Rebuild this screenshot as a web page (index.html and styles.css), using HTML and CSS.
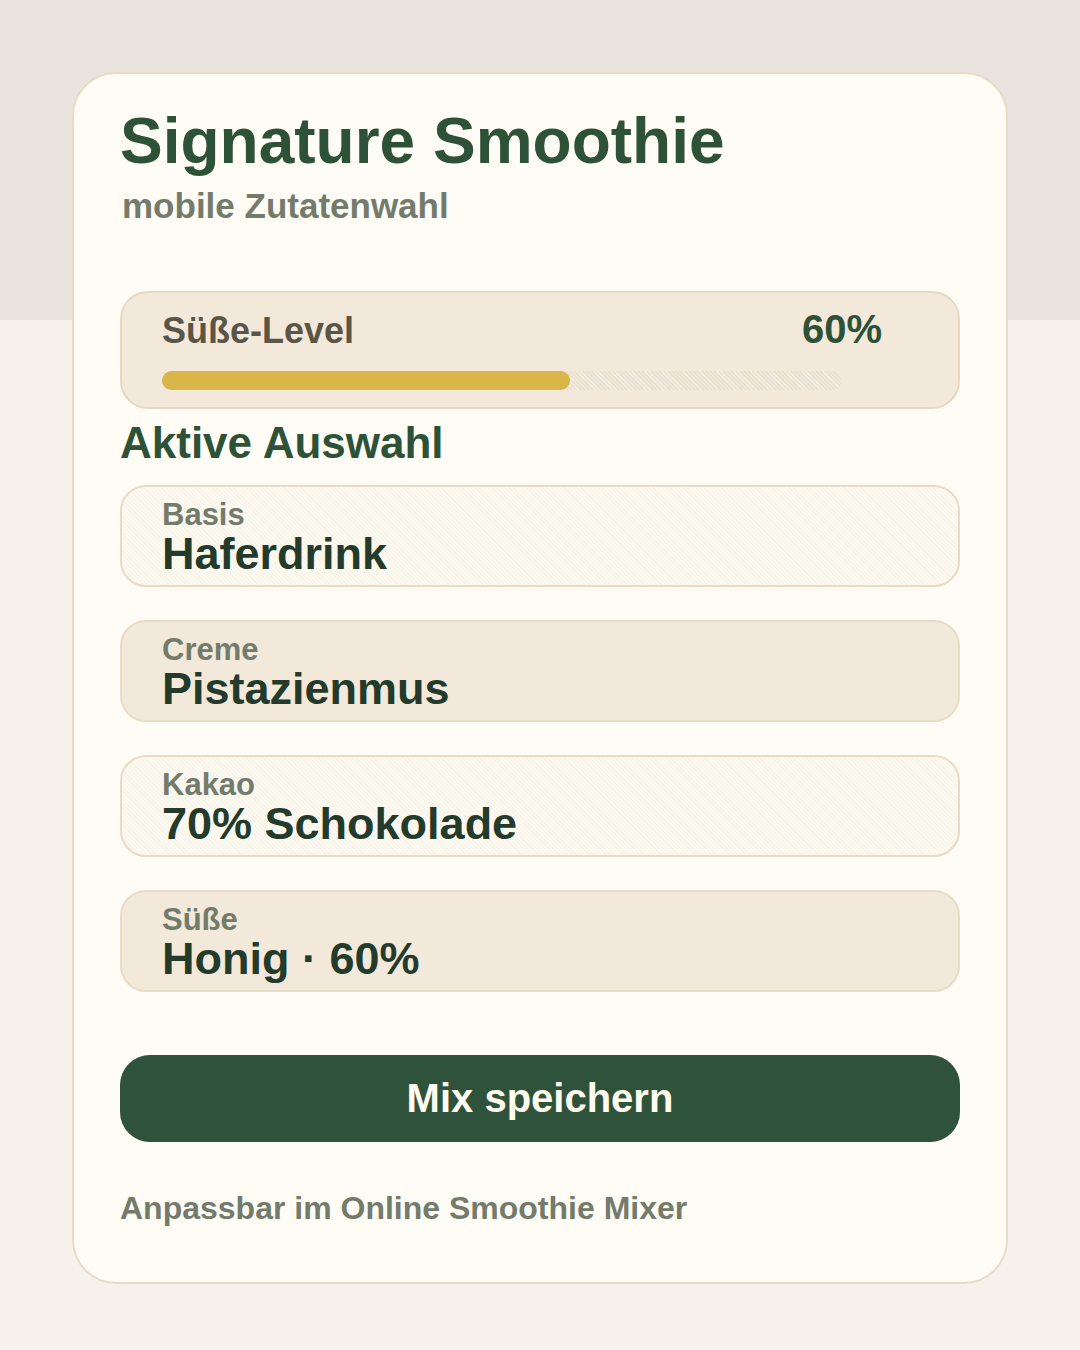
FILE: index.html
```html
<!DOCTYPE html>
<html lang="de">
<head>
    <meta charset="UTF-8">
    <meta name="viewport" content="width=device-width, initial-scale=1.0">
    <title>Signature Smoothie</title>
    <link rel="stylesheet" href="styles.css">
</head>
<body>

    <div class="card">
        <h1 class="title">Signature Smoothie</h1>
        <p class="subtitle">mobile Zutatenwahl</p>

        <div class="level">
            <div class="level-head">
                <span class="level-label">Süße-Level</span>
                <span class="level-value">60%</span>
            </div>
            <div class="track">
                <div class="fill" style="width: 60%"></div>
            </div>
        </div>

        <h2 class="section">Aktive Auswahl</h2>

        <div class="choices">
            <div class="choice">
                <div class="choice-label">Basis</div>
                <div class="choice-value">Haferdrink</div>
            </div>
            <div class="choice alt">
                <div class="choice-label">Creme</div>
                <div class="choice-value">Pistazienmus</div>
            </div>
            <div class="choice">
                <div class="choice-label">Kakao</div>
                <div class="choice-value">70% Schokolade</div>
            </div>
            <div class="choice alt">
                <div class="choice-label">Süße</div>
                <div class="choice-value">Honig · 60%</div>
            </div>
        </div>

        <button class="save">Mix speichern</button>

        <p class="note">Anpassbar im Online Smoothie Mixer</p>
    </div>

</body>
</html>
```

FILE: styles.css
```css
html {
    background-color: #f6f2eb;
}

body {
    margin: 0;
    padding: 72px 0 68px;
    font-family: "Liberation Sans", Arial, sans-serif;
    font-weight: bold;
    background: #f6f2eb linear-gradient(#e8e3dc, #e8e3dc) top / 100% 320px no-repeat;
}

.card {
    width: 936px;
    box-sizing: border-box;
    margin: 0 auto;
    padding: 32px 46px 55px;
    background-color: #fffcf5;
    border: 2px solid #e8dcc9;
    border-radius: 44px;
}

.title {
    margin: 0;
    font-size: 64px;
    line-height: 70px;
    color: #2e5238;
}

.subtitle {
    margin: 10px 0 0 2px;
    font-size: 35px;
    line-height: 40px;
    color: #737b6c;
}

.level {
    margin-top: 65px;
    padding: 14px 76px 17px 40px;
    background-color: #f3e9da;
    border: 2px solid #e6d8c4;
    border-radius: 28px;
}

.level-head {
    display: flex;
    justify-content: space-between;
    align-items: baseline;
    line-height: 44px;
}

.level-label {
    font-size: 36px;
    color: #5b5545;
}

.level-value {
    font-size: 40px;
    color: #2e5238;
}

.track {
    margin: 18px 40px 0 0;
    height: 19px;
    border-radius: 10px;
    background-color: #ece2d2;
    background-image: repeating-linear-gradient(45deg, rgba(255,255,255,0.35) 0 1px, transparent 1px 3px);
}

.fill {
    height: 100%;
    border-radius: 10px;
    background-color: #d9b649;
}

.section {
    margin: 9px 0 17px;
    font-size: 44px;
    line-height: 50px;
    color: #2e5238;
}

.choices {
    display: flex;
    flex-direction: column;
    gap: 33px;
}

.choice {
    padding: 12px 40px 8px;
    background-color: #fcf9f1;
    background-image: repeating-linear-gradient(45deg, rgba(240,232,218,0.35) 0 1px, transparent 1px 3px);
    border: 2px solid #e8dcc9;
    border-radius: 26px;
}

.choice.alt {
    background-color: #f3e9da;
    background-image: none;
}

.choice-label {
    font-size: 31px;
    line-height: 32px;
    color: #737b6c;
}

.choice-value {
    font-size: 45px;
    line-height: 46px;
    color: #243a2b;
}

.save {
    display: block;
    width: 100%;
    height: 87px;
    margin-top: 63px;
    border: none;
    border-radius: 30px;
    background-color: #2f533a;
    color: #fffcf0;
    font-family: inherit;
    font-weight: bold;
    font-size: 40px;
}

.note {
    margin: 47px 0 0;
    font-size: 32px;
    line-height: 38px;
    color: #737b6c;
}
```
